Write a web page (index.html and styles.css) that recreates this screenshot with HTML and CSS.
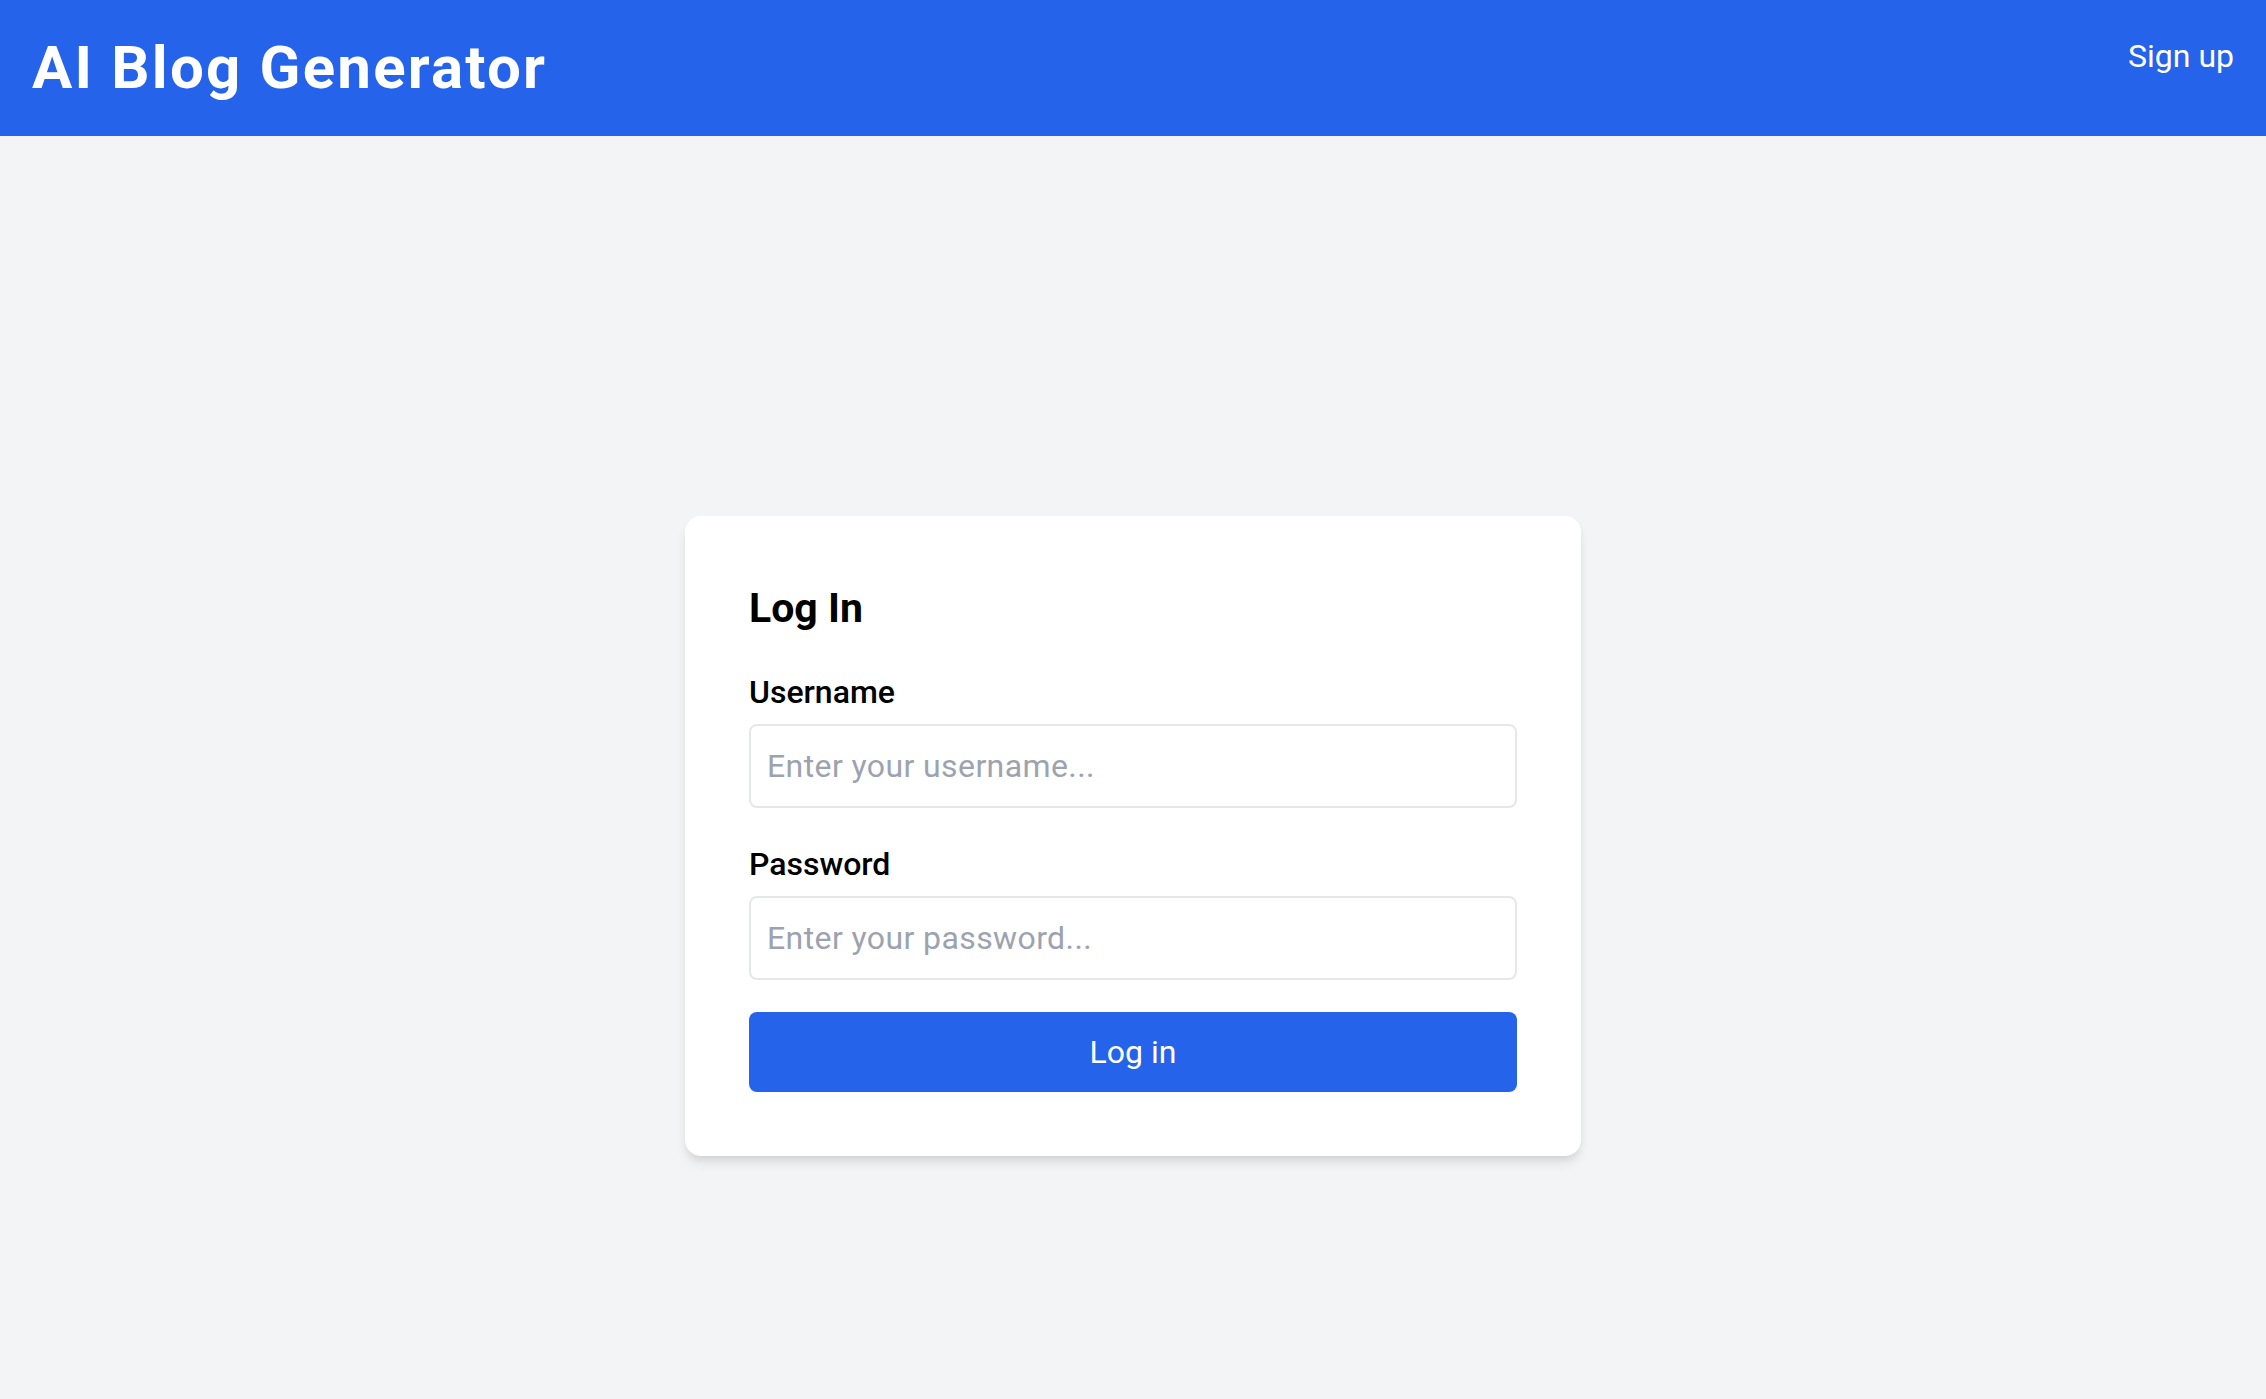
FILE: index.html
```html
<!DOCTYPE html>
<html lang="en">
<head>
<meta charset="utf-8">
<title>AI Blog Generator - Log In</title>
<link rel="stylesheet" href="styles.css">
</head>
<body>
<header class="topbar">
  <h1 class="brand">AI Blog Generator</h1>
  <nav class="nav"><a class="nav-link" href="#">Sign up</a></nav>
</header>
<main class="main">
  <form class="card" onsubmit="return false">
    <h2 class="card-title">Log In</h2>
    <div class="field">
      <label class="label" for="username">Username</label>
      <input class="input" id="username" type="text" placeholder="Enter your username...">
    </div>
    <div class="field">
      <label class="label" for="password">Password</label>
      <input class="input" id="password" type="password" placeholder="Enter your password...">
    </div>
    <button class="button" type="submit">Log in</button>
  </form>
</main>
</body>
</html>
```

FILE: styles.css
```css
* { box-sizing: border-box; }
html, body { margin: 0; padding: 0; }
body {
  background: #f3f4f6;
  font-family: Roboto, "Noto Sans", "Liberation Sans", sans-serif;
  color: #000;
}
.topbar {
  background: #2563eb;
  color: #fff;
  padding: 32px;
  display: flex;
  justify-content: space-between;
  align-items: flex-start;
}
.brand {
  margin: 0;
  font-size: 60px;
  line-height: 72px;
  font-weight: 700;
  letter-spacing: 2.2px;
}
.nav-link {
  display: block;
  color: #fff;
  text-decoration: none;
  font-size: 32px;
  line-height: 48px;
}
.main {
  min-height: 100vh;
  display: flex;
  align-items: center;
  justify-content: center;
}
.card {
  width: 896px;
  background: #fff;
  border-radius: 16px;
  padding: 64px;
  box-shadow: 0 8px 12px -2px rgba(0,0,0,0.1), 0 4px 8px -4px rgba(0,0,0,0.1);
}
.card-title {
  margin: 0 0 32px;
  font-size: 41px;
  line-height: 56px;
  font-weight: 700;
}
.field { margin-bottom: 32px; }
.label {
  display: block;
  font-size: 32px;
  line-height: 48px;
  font-weight: 500;
  margin-bottom: 8px;
}
.input {
  display: block;
  width: 100%;
  font-family: inherit;
  font-size: 32px;
  line-height: 48px;
  letter-spacing: 0.4px;
  padding: 16px 16px;
  border: 2px solid #e5e7eb;
  border-radius: 8px;
  background: #fff;
  color: #111827;
  outline: none;
}
.input::placeholder { color: #9ca3af; }
.button {
  display: block;
  width: 100%;
  font-family: inherit;
  font-size: 32px;
  line-height: 48px;
  padding: 16px;
  border: 0;
  border-radius: 8px;
  background: #2563eb;
  color: #fff;
  cursor: pointer;
}
```
